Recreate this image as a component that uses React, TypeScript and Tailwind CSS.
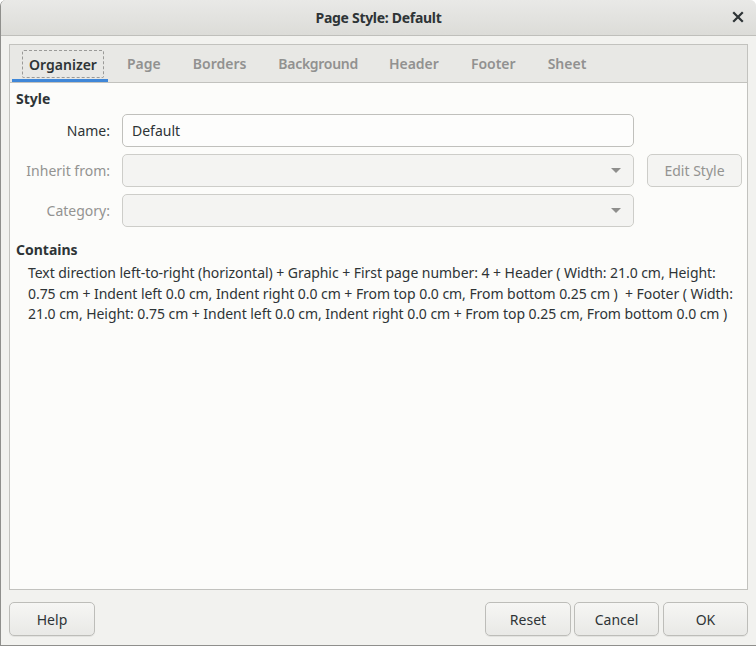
import React from "react";

const font = { fontFamily: '"Noto Sans", "DejaVu Sans", sans-serif' };

function Arrow() {
  return (
    <svg width="10" height="6" viewBox="0 0 10 6" className="shrink-0">
      <path d="M0 0 L10 0 L5 5 Z" fill="#8e8e8c" />
    </svg>
  );
}

function Btn({ children, className = "" }: { children: React.ReactNode; className?: string }) {
  return (
    <div
      className={
        "h-[34px] flex items-center justify-center rounded-[5px] border border-[#bdbdb9] bg-gradient-to-b from-[#f6f6f4] to-[#e9e9e6] text-[14px] text-[#2e3436] shadow-[0_1px_0_rgba(0,0,0,0.06)] " +
        className
      }
    >
      {children}
    </div>
  );
}

export default function App() {
  return (
    <div style={font} className="w-[756px] h-[646px] flex flex-col bg-[#f2f2ef] border-l border-b border-[#8f8f8c] rounded-tl-[6px] rounded-tr-[6px] overflow-hidden text-[#2e3436]">
      {/* Title bar */}
      <div className="h-[36px] shrink-0 flex items-center relative bg-gradient-to-b from-[#e9e9e7] to-[#dcdcd8] border-b border-[#bfbfbb]">
        <div className="flex-1 text-center text-[14px] font-bold tracking-[-0.3px] text-[#2e3436]">Page Style: Default</div>
        <div className="absolute right-[11px] top-[10px]">
          <svg width="14" height="14" viewBox="0 0 14 14">
            <path d="M3 3 L11 11 M11 3 L3 11" stroke="#2e3436" strokeWidth="2.2" strokeLinecap="square" />
          </svg>
        </div>
      </div>

      <div className="flex-1 flex flex-col px-[8px] pt-[8px] pb-[9px]">
        {/* Notebook */}
        <div className="flex-1 flex flex-col border border-[#c2c2be]">
          <div className="h-[38px] shrink-0 flex items-stretch bg-[#e8e8e5] border-b border-[#c2c2be] pl-[2px]">
            <div className="relative w-[96px] pt-[5px] pl-[10px]">
              <div className="w-[82px] h-[28px] flex items-center justify-center border border-dashed border-[#9a9a98] rounded-[2px] text-[14px] font-semibold text-[#2e3436]">
                Organizer
              </div>
              <div className="absolute left-0 right-0 bottom-0 h-[3px] bg-[#3f87d8]" />
            </div>
            <div className="flex items-center text-[14px] font-semibold text-[#919190] mt-[-1px]">
              <span className="ml-[19px]">Page</span>
              <span className="ml-[32px]">Borders</span>
              <span className="ml-[32px] tracking-[-0.3px]">Background</span>
              <span className="ml-[31px]">Header</span>
              <span className="ml-[32px]">Footer</span>
              <span className="ml-[32px]">Sheet</span>
            </div>
          </div>

          <div className="flex-1 bg-[#fcfcfa] pt-[6px] pl-[6px] pr-[4px]">
            <div className="text-[14px] font-bold leading-[20px]">Style</div>
            <div className="mt-[5px] flex flex-col gap-[7px]">
              <div className="flex items-center">
                <div className="w-[94px] text-right text-[14px] text-[#2e3436]">Name:</div>
                <div className="ml-[12px] w-[512px] h-[33px] rounded-[5px] border border-[#c0c0bc] bg-[#fdfdfc] flex items-center px-[9px] text-[14px]">
                  Default
                </div>
              </div>
              <div className="flex items-center">
                <div className="w-[94px] text-right text-[14px] text-[#939391]">Inherit from:</div>
                <div className="ml-[12px] w-[512px] h-[33px] rounded-[5px] border border-[#cdcdc9] bg-[#f4f4f2] flex items-center justify-end pr-[12px]">
                  <Arrow />
                </div>
                <div className="ml-[13px] w-[95px] h-[33px] rounded-[5px] border border-[#cdcdc9] bg-[#f4f4f2] flex items-center justify-center text-[14px] text-[#939391]">
                  Edit Style
                </div>
              </div>
              <div className="flex items-center">
                <div className="w-[94px] text-right text-[14px] text-[#939391]">Category:</div>
                <div className="ml-[12px] w-[512px] h-[33px] rounded-[5px] border border-[#cdcdc9] bg-[#f4f4f2] flex items-center justify-end pr-[12px]">
                  <Arrow />
                </div>
              </div>
            </div>
            <div className="mt-[13px] text-[14px] font-bold leading-[20px]">Contains</div>
            <div className="mt-[3px] pl-[12px] text-[14px] leading-[20.5px] tracking-[-0.05px] text-[#2e3436]">
              Text direction left-to-right (horizontal) + Graphic + First page number: 4 + Header ( Width: 21.0 cm, Height: 0.75 cm + Indent left 0.0 cm, Indent right 0.0 cm + From top 0.0 cm, From bottom 0.25 cm )&nbsp; + Footer ( Width: 21.0 cm, Height: 0.75 cm + Indent left 0.0 cm, Indent right 0.0 cm + From top 0.25 cm, From bottom 0.0 cm )
            </div>
          </div>
        </div>

        {/* Buttons */}
        <div className="mt-[12px] flex items-center">
          <Btn className="w-[86px]">Help</Btn>
          <div className="flex-1" />
          <Btn className="w-[86px]">Reset</Btn>
          <Btn className="w-[85px] ml-[3px]">Cancel</Btn>
          <Btn className="w-[85px] ml-[4px]">OK</Btn>
        </div>
      </div>
    </div>
  );
}
